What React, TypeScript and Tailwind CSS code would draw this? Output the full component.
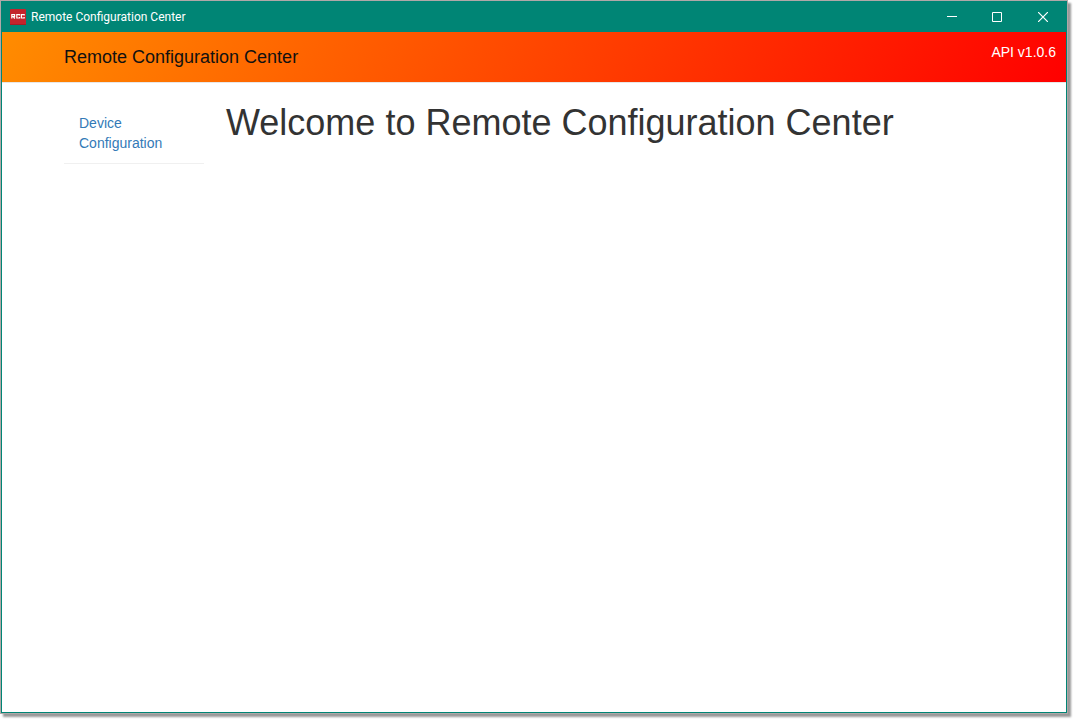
import React from "react";

function AppIcon() {
  return (
    <svg width="16" height="16" viewBox="0 0 16 16" aria-hidden="true">
      <rect width="16" height="16" rx="1" fill="#c3242c" />
      <path d="M0 15h16v1H0z" fill="#a51d25" />
      <g fill="none" stroke="#fff" strokeWidth="1.2">
        <path d="M1.8 9.6V5.6h2.8v2H2.2M3.4 7.6l1.3 2" />
        <path d="M9.6 6.6v-1H6.8v3.4h2.8v-1" />
        <path d="M14.2 6.6v-1h-2.8v3.4h2.8v-1" />
      </g>
    </svg>
  );
}

function TitleBar() {
  const button = "flex h-full w-[46px] items-center justify-center";
  return (
    <div className="flex h-[30px] items-center bg-[#008575] pl-2 text-white">
      <AppIcon />
      <span className="ml-[5px] flex-1 font-[Roboto,sans-serif] text-[12px] leading-4">
        Remote Configuration Center
      </span>
      <div className="flex h-full">
        <button type="button" aria-label="Minimize" className={button}>
          <svg width="12" height="10" viewBox="0 0 12 10" stroke="currentColor">
            <path d="M2 4.5h10" />
          </svg>
        </button>
        <button type="button" aria-label="Maximize" className={button}>
          <svg width="10" height="10" viewBox="0 0 10 10" fill="none" stroke="currentColor">
            <path d="M.5.5h9v9h-9z" />
          </svg>
        </button>
        <button type="button" aria-label="Close" className={button}>
          <svg width="10" height="10" viewBox="0 0 10 10" stroke="currentColor" strokeWidth="1.2">
            <path d="M0 0l10 10M10 0L0 10" />
          </svg>
        </button>
      </div>
    </div>
  );
}

export default function App() {
  return (
    <div className="flex min-h-screen flex-col bg-white pr-2 pb-2 font-['Liberation_Sans',Arial,sans-serif]">
      <div className="flex flex-1 flex-col border border-[#b0a8a8] shadow-[3px_3px_2px_#999]">
        <div className="flex flex-1 flex-col border border-[#008575] bg-white">
          <TitleBar />
          <header className="flex h-[51px] justify-between border-b border-[#e7e7e7] bg-[linear-gradient(120deg,#ff8c00,#ff0000)] pr-[10px] pl-[62px]">
            <span className="pt-[15px] text-[18px] leading-5 text-[#111]">Remote Configuration Center</span>
            <span className="pt-[10px] text-[14px] leading-5 text-white">API v1.0.6</span>
          </header>
          <div className="flex flex-1 items-start gap-[22px] pt-5 pl-[62px]">
            <nav className="w-[140px] border-b border-[#f0f0f0]">
              <a href="#device-configuration" className="block px-[15px] py-[10px] text-[14px] leading-5 text-[#337ab7]">
                Device Configuration
              </a>
            </nav>
            <main className="flex-1">
              <h1 className="text-[36px] leading-10 text-[#333]">Welcome to Remote Configuration Center</h1>
            </main>
          </div>
        </div>
      </div>
    </div>
  );
}
